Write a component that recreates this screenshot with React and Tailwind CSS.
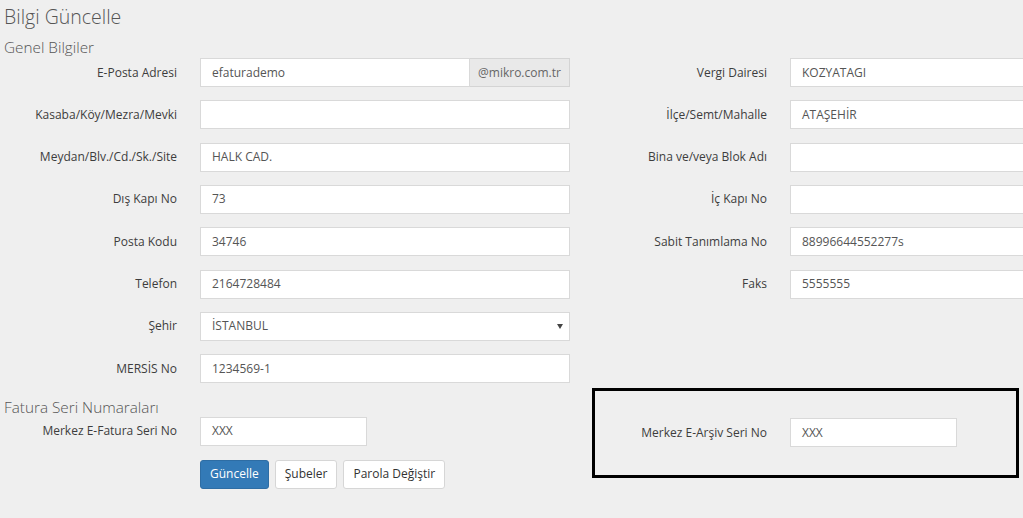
import React from "react";

const font = { fontFamily: '"Open Sans", "Noto Sans", sans-serif' };

function Field({ value, width = "w-[370px]", addon, select }) {
  if (addon) {
    return (
      <div className={`flex h-[29px] ${width}`}>
        <div className="flex-1 h-full bg-white border border-[#d9d9d9] px-[11px] flex items-center text-[12px] text-[#555]">
          {value}
        </div>
        <div className="w-[100px] h-full bg-[#e9e9e9] border border-l-0 border-[#d4d4d4] flex items-center justify-center text-[12px] text-[#666]">
          {addon}
        </div>
      </div>
    );
  }
  return (
    <div
      className={`h-[29px] ${width} shrink-0 bg-white border border-[#d9d9d9] px-[11px] flex items-center justify-between text-[12px] text-[#555]`}
    >
      <span>{value}</span>
      {select && (
        <span className="w-0 h-0 border-l-[3px] border-r-[3px] border-t-[5px] border-l-transparent border-r-transparent border-t-[#444] mr-[-5px]" />
      )}
    </div>
  );
}

function Label({ children, w }) {
  return (
    <div className={`${w} shrink-0 text-right text-[12px] text-[#3d3d3d]`}>{children}</div>
  );
}

const rows = [
  [
    { label: "E-Posta Adresi", value: "efaturademo", addon: "@mikro.com.tr" },
    { label: "Vergi Dairesi", value: "KOZYATAGI" },
  ],
  [
    { label: "Kasaba/Köy/Mezra/Mevki", value: "" },
    { label: "İlçe/Semt/Mahalle", value: "ATAŞEHİR" },
  ],
  [
    { label: "Meydan/Blv./Cd./Sk./Site", value: "HALK CAD." },
    { label: "Bina ve/veya Blok Adı", value: "" },
  ],
  [
    { label: "Dış Kapı No", value: "73" },
    { label: "İç Kapı No", value: "" },
  ],
  [
    { label: "Posta Kodu", value: "34746" },
    { label: "Sabit Tanımlama No", value: "88996644552277s" },
  ],
  [
    { label: "Telefon", value: "2164728484" },
    { label: "Faks", value: "5555555" },
  ],
  [{ label: "Şehir", value: "İSTANBUL", select: true }, null],
  [{ label: "MERSİS No", value: "1234569-1" }, null],
];

export default function App() {
  return (
    <div className="w-[1023px] h-[518px] overflow-hidden bg-[#efefef]" style={font}>
      <div className="h-[34px] pl-[4px] text-[19.5px] font-light leading-[34px] text-[#555]">
        Bilgi Güncelle
      </div>
      <div className="h-[24px] pl-[4px] text-[15.3px] font-light leading-[26px] text-[#555]">
        Genel Bilgiler
      </div>
      <div className="flex flex-col gap-[13.33px]">
        {rows.map(([l, r], i) => (
          <div key={i} className="flex items-center h-[29px]">
            <div className="flex items-center gap-[23px] w-[570px] shrink-0">
              <Label w="w-[177px]">{l.label}</Label>
              <Field value={l.value} addon={l.addon} select={l.select} />
            </div>
            {r && (
              <div className="flex items-center gap-[23px] shrink-0">
                <Label w="w-[197px]">{r.label}</Label>
                <Field value={r.value} />
              </div>
            )}
          </div>
        ))}
      </div>
      <div className="flex mt-[4.7px]">
        <div className="w-[592px] shrink-0">
          <div className="h-[29px] pl-[4px] text-[15.3px] font-light leading-[38px] text-[#555]">
            Fatura Seri Numaraları
          </div>
          <div className="flex items-center gap-[23px]">
            <Label w="w-[177px]">Merkez E-Fatura Seri No</Label>
            <Field value="XXX" width="w-[167px]" />
          </div>
          <div className="flex gap-[6px] pl-[200px] mt-[14px]">
            <button className="h-[29px] px-[9px] bg-[#337ab7] border border-[#2e6da4] rounded-[3px] text-white text-[12px]">
              Güncelle
            </button>
            <button className="h-[29px] px-[9px] bg-white border border-[#d6d6d6] rounded-[3px] text-[#333] text-[12px]">
              Şubeler
            </button>
            <button className="h-[29px] px-[9px] bg-white border border-[#d6d6d6] rounded-[3px] text-[#333] text-[12px]">
              Parola Değiştir
            </button>
          </div>
        </div>
        <div className="w-[427px] h-[90px] shrink-0 border-[3px] border-black flex items-center gap-[23px]">
          <Label w="w-[172px]">Merkez E-Arşiv Seri No</Label>
          <Field value="XXX" width="w-[167px]" />
        </div>
      </div>
    </div>
  );
}
